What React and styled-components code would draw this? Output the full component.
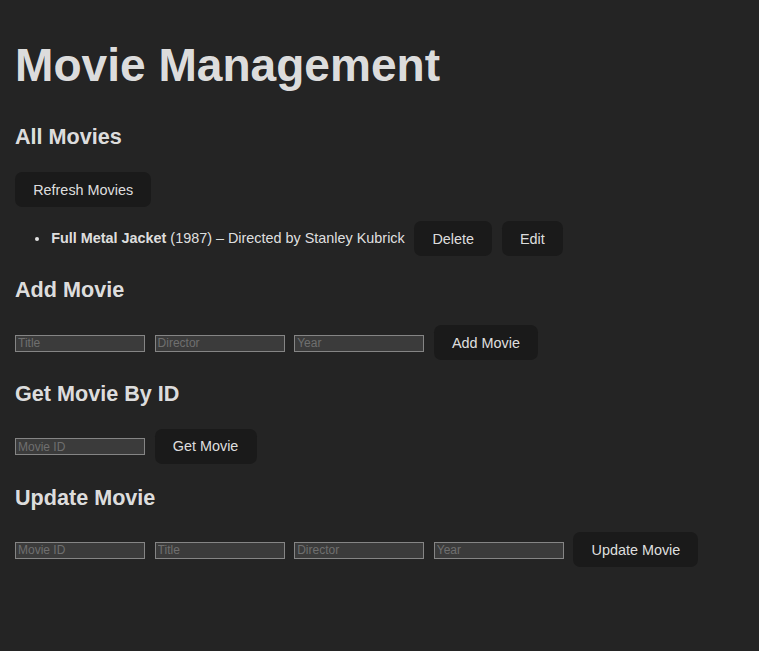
import React from 'react';
import styled, { createGlobalStyle } from 'styled-components';

const GlobalStyle = createGlobalStyle`
  html, body {
    margin: 0;
    padding: 0;
    background: #242424;
  }
  body {
    font-family: "Liberation Sans", Arial, sans-serif;
    font-size: 14.4px;
    line-height: 1.5;
    color: rgba(255, 255, 255, 0.87);
    min-height: 651px;
  }
`;

const Page = styled.div`
  display: flex;
  flex-direction: column;
  align-items: flex-start;
  padding: 40px 15px 40px 15px;
`;

const Title = styled.h1`
  margin: 0;
  font-size: 46.08px;
  line-height: 1.1;
  font-weight: 700;
`;

const Heading = styled.h2`
  margin: ${p => (p.$first ? '33.8px' : '20.8px')} 0 22px 0;
  font-size: 21.6px;
  line-height: 1.2;
  font-weight: 700;
`;

const Button = styled.button`
  display: inline-flex;
  align-items: center;
  height: 35px;
  padding: 0 18.2px;
  border: none;
  border-radius: 7.2px;
  background: #1a1a1a;
  color: rgba(255, 255, 255, 0.87);
  font-family: inherit;
  font-size: 14.4px;
  font-weight: 500;
  cursor: pointer;
  flex-shrink: 0;
`;

const MovieList = styled.ul`
  list-style: none;
  margin: 14px 0 0 0;
  padding: 0 0 0 20px;
`;

const MovieItem = styled.li`
  display: flex;
  align-items: center;
  gap: 9.5px;

  &::before {
    content: '';
    width: 4px;
    height: 4px;
    border-radius: 50%;
    background: rgba(255, 255, 255, 0.87);
    margin-right: 2.7px;
    margin-top: 1px;
  }
`;

const MovieText = styled.span`
  white-space: nowrap;
  b {
    font-weight: 700;
  }
`;

const FormRow = styled.div`
  display: flex;
  align-items: center;
  gap: 9.4px;
`;

const Field = styled.input`
  box-sizing: border-box;
  width: 130.2px;
  height: 17px;
  padding: 0 2px;
  border: 1px solid #858585;
  background: #3b3b3b;
  color: rgba(255, 255, 255, 0.87);
  font-family: inherit;
  font-size: 12px;
  margin-top: 1px;

  &::placeholder {
    color: #6f6f6f;
  }
`;

export default function App() {
  return (
    <>
      <GlobalStyle />
      <Page>
        <Title>Movie Management</Title>

        <Heading $first>All Movies</Heading>
        <Button>Refresh Movies</Button>
        <MovieList>
          <MovieItem>
            <MovieText>
              <b>Full Metal Jacket</b> (1987) – Directed by Stanley Kubrick
            </MovieText>
            <Button>Delete</Button>
            <Button>Edit</Button>
          </MovieItem>
        </MovieList>

        <Heading>Add Movie</Heading>
        <FormRow>
          <Field placeholder="Title" />
          <Field placeholder="Director" />
          <Field placeholder="Year" />
          <Button>Add Movie</Button>
        </FormRow>

        <Heading>Get Movie By ID</Heading>
        <FormRow>
          <Field placeholder="Movie ID" />
          <Button>Get Movie</Button>
        </FormRow>

        <Heading>Update Movie</Heading>
        <FormRow>
          <Field placeholder="Movie ID" />
          <Field placeholder="Title" />
          <Field placeholder="Director" />
          <Field placeholder="Year" />
          <Button>Update Movie</Button>
        </FormRow>
      </Page>
    </>
  );
}
